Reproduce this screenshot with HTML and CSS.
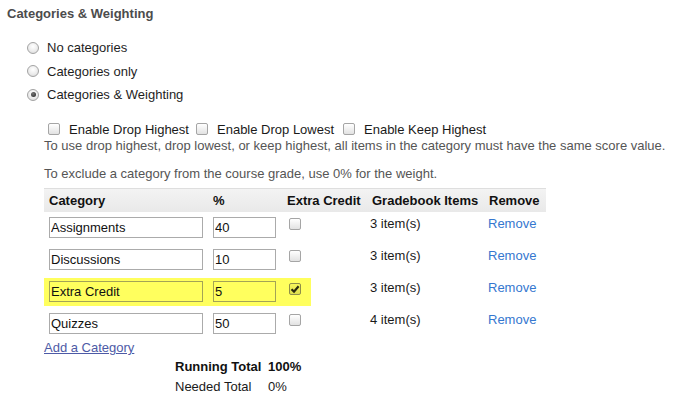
FILE: index.html
```html
<!DOCTYPE html>
<html>
<head>
<meta charset="utf-8">
<link rel="stylesheet" href="styles.css">
</head>
<body>
<div class="page">
  <h2 class="title">Categories &amp; Weighting</h2>
  <div class="radios">
    <label class="radio-row"><span class="radio"></span>No categories</label>
    <label class="radio-row"><span class="radio"></span>Categories only</label>
    <label class="radio-row"><span class="radio on"></span>Categories &amp; Weighting</label>
  </div>
  <div class="weighting">
    <div class="drop-opts">
      <span class="cb"></span><span class="opt o1">Enable Drop Highest</span>
      <span class="cb"></span><span class="opt o2">Enable Drop Lowest</span>
      <span class="cb"></span><span class="opt">Enable Keep Highest</span>
    </div>
    <p class="note">To use drop highest, drop lowest, or keep highest, all items in the category must have the same score value.</p>
    <p class="note note2">To exclude a category from the course grade, use 0% for the weight.</p>
    <div class="cat-table">
      <div class="row head">
        <div class="cell">Category</div>
        <div class="cell">%</div>
        <div class="cell">Extra Credit</div>
        <div class="cell">Gradebook Items</div>
        <div class="cell">Remove</div>
      </div>
      <div class="row">
        <div class="cell in"><input class="txt name" value="Assignments"></div>
        <div class="cell in"><input class="txt pct" value="40"></div>
        <div class="cell ck"><span class="cb"></span></div>
        <div class="cell items">3 item(s)</div>
        <div class="cell rm"><a class="link">Remove</a></div>
      </div>
      <div class="row">
        <div class="cell in"><input class="txt name" value="Discussions"></div>
        <div class="cell in"><input class="txt pct" value="10"></div>
        <div class="cell ck"><span class="cb"></span></div>
        <div class="cell items">3 item(s)</div>
        <div class="cell rm"><a class="link">Remove</a></div>
      </div>
      <div class="row hl">
        <div class="cell in"><input class="txt name" value="Extra Credit"></div>
        <div class="cell in"><input class="txt pct" value="5"></div>
        <div class="cell ck"><span class="cb checked"><svg width="10" height="10" viewBox="0 0 10 10"><path d="M1.5 5.2 L4 7.6 L8.6 2.2" fill="none" stroke="#2a2a10" stroke-width="2.2"/></svg></span></div>
        <div class="cell items">3 item(s)</div>
        <div class="cell rm"><a class="link">Remove</a></div>
      </div>
      <div class="row">
        <div class="cell in"><input class="txt name" value="Quizzes"></div>
        <div class="cell in"><input class="txt pct" value="50"></div>
        <div class="cell ck"><span class="cb"></span></div>
        <div class="cell items">4 item(s)</div>
        <div class="cell rm"><a class="link">Remove</a></div>
      </div>
    </div>
    <a class="add">Add a Category</a>
    <div class="totals">
      <span class="b">Running Total</span><span class="b">100%</span>
      <span>Needed Total</span><span>0%</span>
    </div>
  </div>
</div>
</body>
</html>
```
FILE: styles.css
```css
html, body {
  margin: 0;
  padding: 0;
  background: #fff;
}
body {
  font-family: "Liberation Sans", Arial, sans-serif;
  font-size: 13px;
  color: #222;
}
.page {
  display: flex;
  flex-direction: column;
}
.title {
  margin: 0;
  padding: 6px 0 0 7px;
  font-size: 13px;
  line-height: 16px;
  font-weight: bold;
  color: #4c4c4c;
}
.radios {
  margin-top: 14px;
  display: flex;
  flex-direction: column;
}
.radio-row {
  height: 23.5px;
  display: flex;
  align-items: center;
  padding-left: 27px;
  gap: 8px;
  color: #1e1e1e;
}
.radio {
  width: 12px;
  height: 12px;
  box-sizing: border-box;
  border-radius: 50%;
  border: 1px solid #a3a3a3;
  background: radial-gradient(circle at 50% 35%, #ffffff 0%, #ececec 55%, #d4d4d4 100%);
  display: flex;
  align-items: center;
  justify-content: center;
}
.radio.on::after {
  content: "";
  width: 5px;
  height: 5px;
  border-radius: 50%;
  background: radial-gradient(circle at 40% 35%, #777, #222);
}
.weighting {
  padding-left: 44px;
  display: flex;
  flex-direction: column;
  align-items: flex-start;
}
.drop-opts {
  margin-top: 13.5px;
  height: 18px;
  display: flex;
  align-items: center;
  padding-left: 4px;
  color: #1a1a1a;
}
.drop-opts .opt {
  margin-left: 9px;
  margin-right: 9px;
  white-space: nowrap;
}
.drop-opts .o1 { width: 118px; }
.drop-opts .o2 { width: 117px; }
.cb {
  width: 12px;
  height: 12px;
  box-sizing: border-box;
  border: 1px solid #a5a5a5;
  border-radius: 2px;
  background: linear-gradient(#ffffff, #e2e2e2);
  display: inline-flex;
  align-items: center;
  justify-content: center;
  flex: none;
}
.note {
  margin: 0;
  line-height: 16px;
  color: #555;
}
.note2 {
  margin-top: 12px;
}
.cat-table {
  margin-top: 6px;
  width: 502px;
  display: flex;
  flex-direction: column;
}
.row {
  display: grid;
  grid-template-columns: 164px 74px 85px 117px 62px;
  height: 32px;
}
.row.head {
  height: 24px;
  box-sizing: border-box;
  border-top: 1px solid #dedede;
  background: linear-gradient(#f3f3f3, #e9e9e9);
  align-items: center;
  font-weight: bold;
  color: #111;
}
.row.head .cell {
  padding-left: 5px;
  line-height: 16px;
}
.cell.in {
  padding: 5px 0 0 5px;
}
.txt {
  box-sizing: border-box;
  height: 21px;
  border: 1px solid #ababab;
  padding: 0 0 0 1px;
  margin: 0;
  font-family: "Liberation Sans", Arial, sans-serif;
  font-size: 13px;
  color: #111;
  background: #fff;
  outline: none;
}
.txt.name { width: 154px; }
.txt.pct { width: 63px; }
.cell.ck {
  padding: 6px 0 0 7px;
}
.cell.items {
  padding: 4px 0 0 3px;
  line-height: 16px;
  color: #1a1a1a;
}
.cell.rm {
  padding: 4px 0 0 4px;
  line-height: 16px;
}
.link {
  color: #3577cf;
  text-decoration: none;
}
.row.hl {
  background: linear-gradient(#ffff5e, #ffff5e) no-repeat 0 2px / 267px 28px;
}
.row.hl .txt {
  background: transparent;
  border-color: #a3a356;
}
.cb.checked {
  border-color: #8f8f4a;
  background: linear-gradient(#f6f65a, #dede4f);
}
.add {
  line-height: 16px;
  color: #4d5aa6;
  text-decoration: underline;
}
.totals {
  margin: 3px 0 0 131px;
  display: grid;
  grid-template-columns: 93px auto;
  row-gap: 4px;
  line-height: 16px;
  color: #1a1a1a;
}
.totals .b {
  font-weight: bold;
  color: #111;
}
```
